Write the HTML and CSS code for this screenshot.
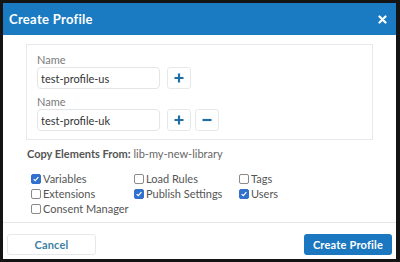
FILE: index.html
```html
<!DOCTYPE html>
<html lang="en">
<head>
    <meta charset="UTF-8">
    <meta name="viewport" content="width=device-width, initial-scale=1.0">
    <title>Create Profile</title>
    <link rel="stylesheet" href="styles.css">
</head>
<body>
    <div class="dialog">
        <!-- Header -->
        <div class="dialog-header">
            <span class="dialog-title">Create Profile</span>
            <svg class="close-icon" width="9" height="9" viewBox="0 0 9 9">
                <path d="M1.5 1.5 L7.5 7.5 M7.5 1.5 L1.5 7.5" stroke="#fff" stroke-width="2.2" stroke-linecap="round"/>
            </svg>
        </div>

        <div class="dialog-body">
            <!-- Profile names -->
            <div class="profiles">
                <div class="profile-group">
                    <label class="field-label">Name</label>
                    <div class="profile-row">
                        <input type="text" class="name-input" value="test-profile-us">
                        <button class="icon-btn">
                            <svg width="10" height="10" viewBox="0 0 10 10"><path d="M5 0.5 V9.5 M0.5 5 H9.5" stroke="#1f6ea6" stroke-width="2.2"/></svg>
                        </button>
                    </div>
                </div>
                <div class="profile-group">
                    <label class="field-label">Name</label>
                    <div class="profile-row">
                        <input type="text" class="name-input" value="test-profile-uk">
                        <button class="icon-btn">
                            <svg width="10" height="10" viewBox="0 0 10 10"><path d="M5 0.5 V9.5 M0.5 5 H9.5" stroke="#1f6ea6" stroke-width="2.2"/></svg>
                        </button>
                        <button class="icon-btn">
                            <svg width="10" height="10" viewBox="0 0 10 10"><path d="M0.5 5 H9.5" stroke="#1f6ea6" stroke-width="2.2"/></svg>
                        </button>
                    </div>
                </div>
            </div>

            <!-- Copy elements -->
            <div class="copy-from"><strong>Copy Elements From:</strong> lib-my-new-library</div>

            <div class="options">
                <label class="option"><span class="box checked"></span>Variables</label>
                <label class="option"><span class="box"></span>Load Rules</label>
                <label class="option"><span class="box"></span>Tags</label>
                <label class="option"><span class="box"></span>Extensions</label>
                <label class="option"><span class="box checked"></span>Publish Settings</label>
                <label class="option"><span class="box checked"></span>Users</label>
                <label class="option"><span class="box"></span>Consent Manager</label>
            </div>
        </div>

        <!-- Footer -->
        <div class="dialog-footer">
            <button class="btn-cancel">Cancel</button>
            <button class="btn-primary">Create Profile</button>
        </div>
    </div>
</body>
</html>
```

FILE: styles.css
```css
body {
    margin: 0;
    padding: 3px 4px 3px 3px;
    background-color: #141414;
    font-family: Lato, "Open Sans", Arial, sans-serif;
}
.dialog {
    height: 256px;
    background-color: #ffffff;
    display: flex;
    flex-direction: column;
}
.dialog-header {
    height: 32px;
    background-color: #1b7bc2;
    display: flex;
    align-items: center;
    justify-content: space-between;
    padding: 0 9px 0 6px;
    flex-shrink: 0;
}
.dialog-title {
    color: #fff;
    font-size: 13px;
    font-weight: bold;
    letter-spacing: 0.3px;
}
.close-icon {
    display: block;
}
.dialog-body {
    flex: 1;
    min-height: 0;
    padding: 9px 23px 0 23px;
}
.profiles {
    border: 1px solid #e6eaee;
    padding: 8px 10px 8px 10px;
    display: flex;
    flex-direction: column;
    gap: 6px;
}
.field-label {
    display: block;
    font-size: 11px;
    line-height: 14px;
    color: #7a7a7a;
}
.profile-row {
    display: flex;
    gap: 4px;
}
.name-input {
    width: 123px;
    height: 22px;
    box-sizing: border-box;
    margin: 0 3px 0 0;
    padding: 0 3px;
    border: 1px solid #e3e6e9;
    border-radius: 4px;
    font-family: inherit;
    font-size: 11px;
    color: #333;
    outline: none;
}
.icon-btn {
    width: 24px;
    height: 22px;
    padding: 0;
    background: #fff;
    border: 1px solid #e6e9ec;
    border-radius: 3px;
    display: flex;
    align-items: center;
    justify-content: center;
}
.copy-from {
    margin: 6px 0 0 1px;
    font-size: 11px;
    line-height: 16px;
    color: #666;
}
.copy-from strong {
    color: #555;
}
.options {
    margin: 10px 0 0 5px;
    display: grid;
    grid-template-columns: 103px 105px 100px;
    row-gap: 1px;
}
.option {
    display: flex;
    align-items: center;
    font-size: 11px;
    line-height: 14px;
    color: #555;
    white-space: nowrap;
}
.box {
    width: 8px;
    height: 8px;
    border: 1px solid #8a8a8a;
    border-radius: 2px;
    margin-right: 2px;
    flex-shrink: 0;
}
.box.checked {
    background-color: #3170cc;
    border-color: #3170cc;
    background-image: url("data:image/svg+xml,%3Csvg xmlns='http://www.w3.org/2000/svg' viewBox='0 0 8 8'%3E%3Cpath d='M1.6 4.1 L3.3 5.7 L6.4 2.2' fill='none' stroke='white' stroke-width='1.2'/%3E%3C/svg%3E");
}
.dialog-footer {
    border-top: 1px solid #e4e7ea;
    padding: 11px 4px 4px 4px;
    display: flex;
    justify-content: space-between;
}
.btn-cancel,
.btn-primary {
    height: 21px;
    padding: 0;
    border-radius: 3px;
    font-family: inherit;
    font-size: 11px;
    font-weight: bold;
    letter-spacing: 0.2px;
}
.btn-cancel {
    width: 89px;
    background: #fff;
    border: 1px solid #e6e9ec;
    color: #3f7fa6;
}
.btn-primary {
    width: 88px;
    background-color: #1b78c0;
    border: none;
    color: #fff;
}
```
